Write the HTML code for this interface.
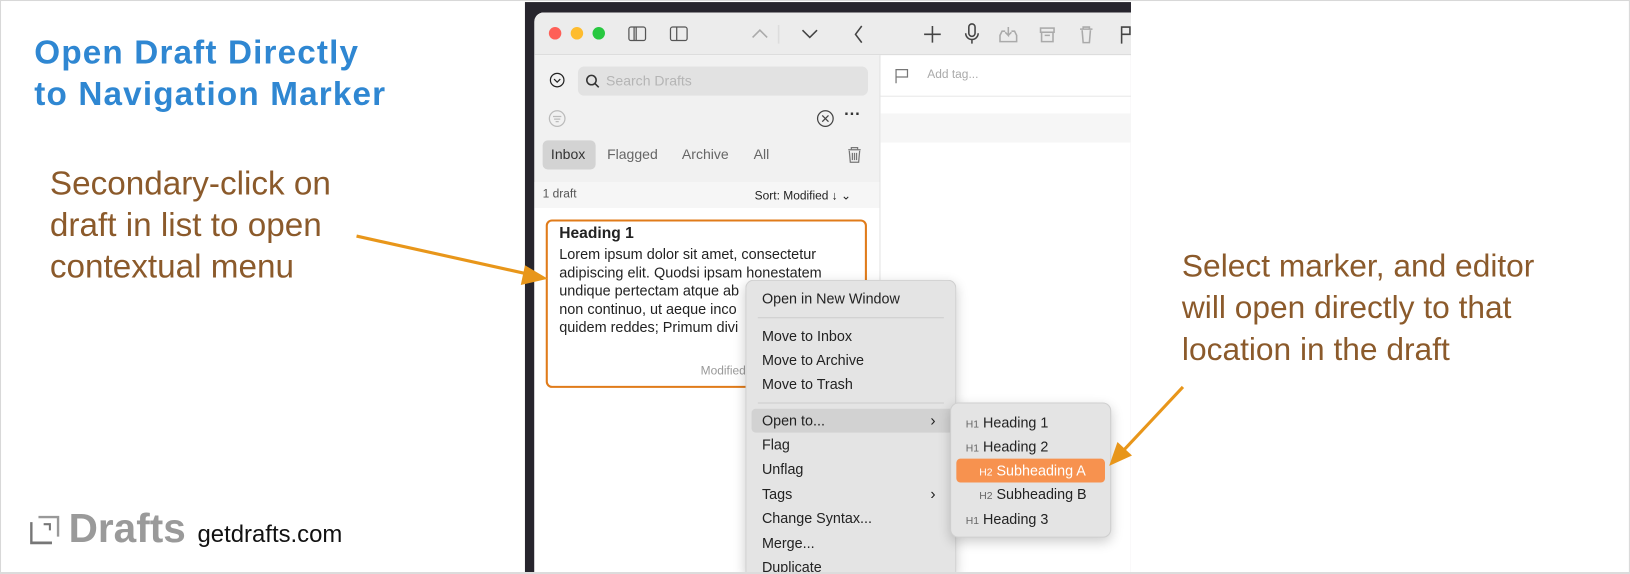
<!DOCTYPE html>
<html><head><meta charset="utf-8"><style>
html,body{margin:0;padding:0;background:#fff;overflow:hidden}
body{width:1630px;height:574px;font-family:"Liberation Sans",sans-serif}
#w{position:absolute;left:0;top:0;width:1568px;height:552px;transform:scale(1.0395,1.04);transform-origin:0 0}
.a{position:absolute}
.frame{left:0;top:0;width:1566px;height:550px;border:1px solid #d8d8d8}
.title{left:33px;top:30px;font-size:32px;font-weight:bold;color:#2f87d2;line-height:40px;letter-spacing:1.1px}
.brown{color:#8b5a2b;font-size:31px;line-height:40px}
.dark{left:505px;top:2px;width:583px;height:548px;background:#27252d}
.win{left:514px;top:12px;width:574px;height:538px;background:#fff;border-radius:9px 0 0 0;overflow:hidden}
.tb{left:0;top:0;width:574px;height:40px;background:#ececec;border-bottom:1px solid #dcdcdc}
.side{left:0;top:41px;width:332px;height:497px;background:#f1f1f1;border-right:1px solid #e2e2e2}
.m{font-size:13.5px;color:#222}
.menu{background:#e4e4e4;border:1px solid #cfcfcf;border-radius:8px;box-shadow:0 4px 12px rgba(0,0,0,.2);overflow:hidden}
.mi{position:absolute;left:15px;font-size:13.8px;color:#222}
.sep{position:absolute;left:11px;right:11px;height:1px;background:#cdcdcd}
.h{font-size:10px;color:#666}
</style></head><body><div id="w">
<div class="a frame"></div>
<div class="a title">Open Draft Directly<br>to Navigation Marker</div>
<div class="a brown" style="left:48px;top:156px;font-size:32px">Secondary-click on<br>draft in list to open<br>contextual menu</div>
<div class="a brown" style="left:1137px;top:236px;font-size:30.5px">Select marker, and editor<br>will open directly to that<br>location in the draft</div>

<div class="a dark"></div>
<div class="a win">
 <div class="a tb">
  <div class="a" style="left:14px;top:14px;width:12px;height:12px;border-radius:6px;background:#fe5f57"></div>
  <div class="a" style="left:35px;top:14px;width:12px;height:12px;border-radius:6px;background:#febc2e"></div>
  <div class="a" style="left:56px;top:14px;width:12px;height:12px;border-radius:6px;background:#28c840"></div>
  <svg class="a" style="left:90px;top:10px" width="100" height="22" viewBox="0 0 100 22" fill="none" stroke="#555" stroke-width="1.2"><rect x="1" y="4" width="16" height="13" rx="2"/><line x1="6" y1="4" x2="6" y2="17"/><line x1="8" y1="4" x2="8" y2="17"/><rect x="41" y="4" width="16" height="13" rx="2"/><line x1="47" y1="4" x2="47" y2="17"/></svg>
  <svg class="a" style="left:205px;top:8px" width="370" height="26" viewBox="0 0 370 26" fill="none" stroke="#444" stroke-width="1.5"><path d="M5 16l7-7 7 7" stroke="#aaa"/><line x1="30" y1="4" x2="30" y2="22" stroke="#ddd"/><path d="M53 9l7 7 7-7"/><path d="M110 5l-6 8 6 8"/><path d="M178 5v16M170 13h16"/><rect x="213" y="3" width="6" height="12" rx="3"/><path d="M210 12a6 6 0 0 0 12 0M216 18v4"/><path d="M248 10h-3l-2 4v6h16v-6l-2-4h-3M251 6v8l-3-3M251 14l3-3" stroke="#aaa"/><rect x="282" y="7" width="13" height="4" stroke="#aaa"/><path d="M283 11v9h11v-9M286 14h5" stroke="#aaa"/><path d="M320 8h12M323 8V6h6v2M322 9l1 12h6l1-12" stroke="#aaa"/><path d="M360 22V6h8v7h-8" /></svg>
 </div>
 <div class="a side">
  <svg class="a" style="left:14px;top:16px" width="16" height="16" fill="none" stroke="#222" stroke-width="1.2"><circle cx="8" cy="8" r="6.5"/><path d="M5 7l3 3 3-3"/></svg>
  <div class="a" style="left:42px;top:11px;width:279px;height:28px;background:#e2e2e2;border-radius:6px"></div>
  <svg class="a" style="left:49px;top:18px" width="14" height="14" fill="none" stroke="#333" stroke-width="1.5"><circle cx="6" cy="6" r="4.5"/><path d="M9.5 9.5l3.5 3.5"/></svg>
  <div class="a m" style="left:69px;top:17px;color:#b5b5b5">Search Drafts</div>
  <svg class="a" style="left:13px;top:52px" width="18" height="18" fill="none" stroke="#bbb" stroke-width="1.2"><circle cx="9" cy="9" r="7.5"/><path d="M5 7h8M6 9.5h6M7.5 12h3"/></svg>
  <svg class="a" style="left:271px;top:52px" width="18" height="18" fill="none" stroke="#444" stroke-width="1.2"><circle cx="9" cy="9" r="7.5"/><path d="M6 6l6 6M12 6l-6 6"/></svg>
  <div class="a" style="left:298px;top:49px;font-size:16px;font-weight:bold;color:#333">···</div>
  <div class="a" style="left:8px;top:82px;width:51px;height:28px;background:#d3d3d3;border-radius:5px"></div>
  <div class="a m" style="left:16px;top:88px;color:#333">Inbox</div>
  <div class="a m" style="left:70px;top:88px;color:#666">Flagged</div>
  <div class="a m" style="left:142px;top:88px;color:#666">Archive</div>
  <div class="a m" style="left:211px;top:88px;color:#666">All</div>
  <svg class="a" style="left:300px;top:87px" width="16" height="18" fill="none" stroke="#777" stroke-width="1.2"><path d="M2 4h12M5 4V2h6v2M3 5l1 11h8l1-11M6 7v7M8 7v7M10 7v7"/></svg>
  <div class="a" style="left:0;top:122px;width:332px;height:25px;background:#f6f6f6"></div>
  <div class="a" style="left:8px;top:128px;font-size:11.5px;color:#555">1 draft</div>
  <div class="a" style="left:212px;top:128px;font-size:11.5px;color:#222">Sort: Modified ↓ ⌄</div>
  <div class="a" style="left:0;top:147px;width:332px;height:350px;background:#fff"></div>
  <div class="a" style="left:11px;top:158px;width:305px;height:158px;border:2px solid #e07b1a;border-radius:6px;background:#fff"></div>
  <div class="a" style="left:24px;top:163px;font-size:15px;font-weight:bold;color:#222">Heading 1</div>
  <div class="a" style="left:24px;top:183px;font-size:13.9px;line-height:17.6px;color:#222;width:300px">Lorem ipsum dolor sit amet, consectetur<br>adipiscing elit. Quodsi ipsam honestatem<br>undique pertectam atque ab<br>non continuo, ut aeque inco<br>quidem reddes; Primum divi</div>
  <div class="a" style="left:160px;top:298px;font-size:11.5px;color:#999">Modified</div>
 </div>
 <svg class="a" style="left:345px;top:52px" width="18" height="18" fill="none" stroke="#777" stroke-width="1.2"><path d="M3 16V3h11v7H3"/></svg>
 <div class="a" style="left:378px;top:54px;font-size:11.5px;color:#aaa">Add tag...</div>
 <div class="a" style="left:333px;top:80px;width:241px;height:1px;background:#e8e8e8"></div>
 <div class="a" style="left:333px;top:97px;width:241px;height:28px;background:#f6f6f6"></div>
</div>

<div class="a menu" style="left:717px;top:269px;width:201px;height:281px;border-bottom:none;border-radius:8px 8px 0 0">
 <div class="mi" style="top:10px">Open in New Window</div>
 <div class="sep" style="top:35px"></div>
 <div class="mi" style="top:46px">Move to Inbox</div>
 <div class="mi" style="top:69px">Move to Archive</div>
 <div class="mi" style="top:92px">Move to Trash</div>
 <div class="sep" style="top:117px"></div>
 <div class="a" style="left:5px;top:123px;width:195px;height:23px;background:#d2d2d2;border-radius:4px"></div>
 <div class="mi" style="top:127px">Open to...</div><div class="mi" style="top:126px;left:177px;font-size:15px">›</div>
 <div class="mi" style="top:150px">Flag</div>
 <div class="mi" style="top:174px">Unflag</div>
 <div class="mi" style="top:198px">Tags</div><div class="mi" style="top:197px;left:177px;font-size:15px">›</div>
 <div class="mi" style="top:221px">Change Syntax...</div>
 <div class="mi" style="top:245px">Merge...</div>
 <div class="mi" style="top:268px">Duplicate</div>
</div>
<div class="a menu" style="left:914px;top:387px;width:153px;height:128px">
 <div class="mi" style="left:14px;top:11px"><span class="h">H1</span> Heading 1</div>
 <div class="mi" style="left:14px;top:34px"><span class="h">H1</span> Heading 2</div>
 <div class="a" style="left:5px;top:53px;width:143px;height:23px;background:#f7924f;border-radius:4px"></div>
 <div class="mi" style="left:27px;top:57px;color:#fff"><span class="h" style="color:#fff">H2</span> Subheading A</div>
 <div class="mi" style="left:27px;top:80px"><span class="h">H2</span> Subheading B</div>
 <div class="mi" style="left:14px;top:104px"><span class="h">H1</span> Heading 3</div>
</div>
<div class="a" style="left:0;top:550px;width:1568px;height:2px;background:#dcdcdc"></div>

<svg class="a" style="left:0;top:0" width="1568" height="552" fill="none" stroke="#e8961a" stroke-width="3">
 <line x1="343" y1="227" x2="510" y2="264"/><path d="M527 268l-22-13-4 19z" fill="#e8961a" stroke="none"/>
 <line x1="1138" y1="372" x2="1080" y2="434"/><path d="M1067 448l8-23 14 13z" fill="#e8961a" stroke="none"/>
</svg>

<svg class="a" style="left:29px;top:496px" width="28" height="28" fill="none" stroke="#777" stroke-width="2.6"><path d="M1 6v20h20"/><path d="M8 1h19v19" stroke="#999"/><path d="M13 8h6v6" stroke="#777" stroke-width="2"/></svg>
<div class="a" style="left:66px;top:487px;font-size:39px;font-weight:bold;color:#9a9a9a">Drafts</div>
<div class="a" style="left:190px;top:500px;font-size:23px;color:#111">getdrafts.com</div>
</div></body></html>
